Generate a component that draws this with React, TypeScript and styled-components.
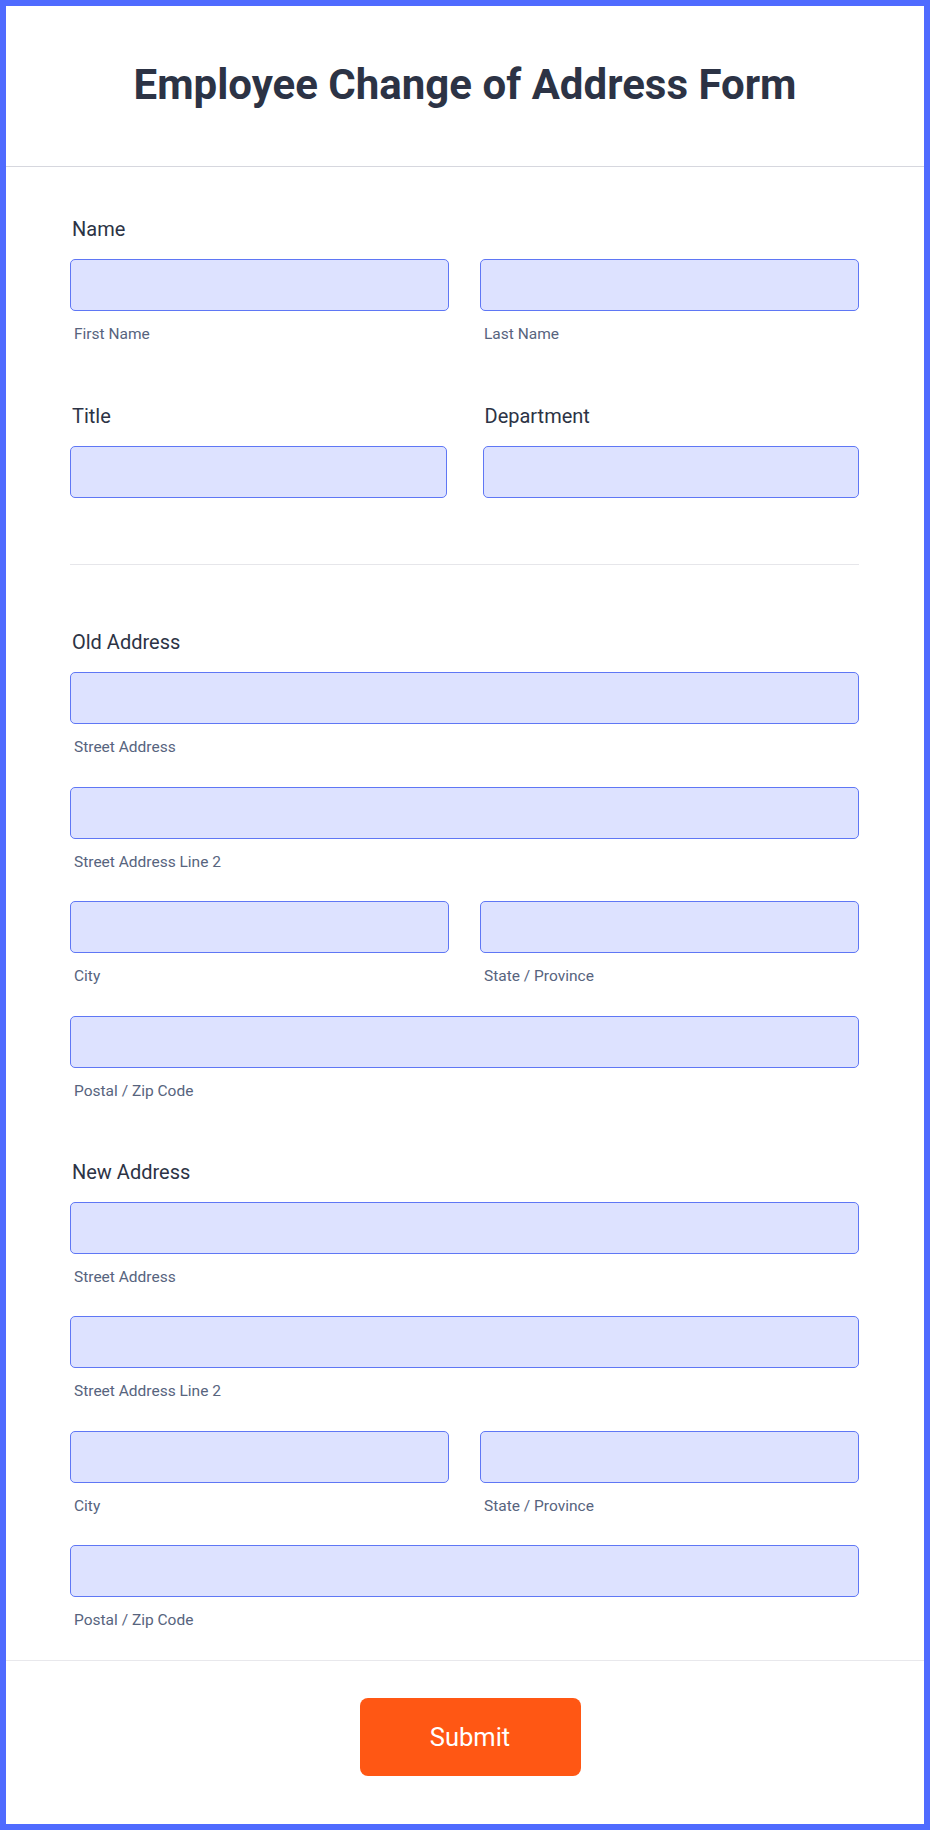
import { createGlobalStyle, styled } from "styled-components";

const GlobalStyle = createGlobalStyle`
  html, body {
    margin: 0;
    padding: 0;
    background: #ffffff;
  }
  * {
    box-sizing: border-box;
  }
`;

export default function App() {
  return (
    <>
      <GlobalStyle />
      <Frame>
        <Header>
          <Heading>Employee Change of Address Form</Heading>
        </Header>
        <Body>
          <Field>
            <Label>Name</Label>
            <Row>
              <Cell>
                <Input />
                <SubLabel>First Name</SubLabel>
              </Cell>
              <Cell>
                <Input />
                <SubLabel>Last Name</SubLabel>
              </Cell>
            </Row>
          </Field>

          <Row $gap={36} $top={60}>
            <Cell>
              <Label>Title</Label>
              <Input />
            </Cell>
            <Cell>
              <Label>Department</Label>
              <Input />
            </Cell>
          </Row>

          <Divider />

          <AddressBlock title="Old Address" />
          <AddressBlock title="New Address" top={59} />
        </Body>
        <Footer>
          <SubmitButton type="button">Submit</SubmitButton>
        </Footer>
      </Frame>
    </>
  );
}

const AddressBlock = ({ title, top = 0 }: { title: string; top?: number }) => (
  <Field $top={top}>
    <Label>{title}</Label>
    <Input />
    <SubLabel>Street Address</SubLabel>
    <Input $top={29.5} />
    <SubLabel>Street Address Line 2</SubLabel>
    <Row $top={29.5}>
      <Cell>
        <Input />
        <SubLabel>City</SubLabel>
      </Cell>
      <Cell>
        <Input />
        <SubLabel>State / Province</SubLabel>
      </Cell>
    </Row>
    <Input $top={29.5} />
    <SubLabel>Postal / Zip Code</SubLabel>
  </Field>
);

const Frame = styled.div`
  width: 930px;
  height: 1830px;
  border: 6px solid #4f6bff;
  background: #ffffff;
  display: flex;
  flex-direction: column;
  font-family: Roboto, "Liberation Sans", sans-serif;
`;

const Header = styled.header`
  height: 161px;
  flex-shrink: 0;
  display: flex;
  align-items: center;
  justify-content: center;
  border-bottom: 1px solid #d6d7de;
`;

const Heading = styled.h1`
  margin: 0;
  padding-bottom: 2px;
  font-size: 42px;
  font-weight: 700;
  line-height: 48px;
  color: #2c3345;
`;

const Body = styled.main`
  padding: 50px 65px 30px 64px;
  display: flex;
  flex-direction: column;
`;

const Field = styled.section<{ $top?: number }>`
  display: flex;
  flex-direction: column;
  margin-top: ${(p) => p.$top ?? 0}px;
`;

const Row = styled.div<{ $gap?: number; $top?: number }>`
  display: grid;
  grid-template-columns: 1fr 1fr;
  column-gap: ${(p) => p.$gap ?? 31}px;
  margin-top: ${(p) => p.$top ?? 0}px;
`;

const Cell = styled.div`
  display: flex;
  flex-direction: column;
  min-width: 0;
`;

const Label = styled.label`
  display: block;
  font-size: 20px;
  line-height: 24px;
  color: #2c3345;
  margin: 0 0 18px 2px;
`;

const Input = styled.div<{ $top?: number }>`
  height: 52px;
  margin-top: ${(p) => p.$top ?? 0}px;
  background: #dde2ff;
  border: 1.5px solid #5f77f5;
  border-radius: 5px;
`;

const SubLabel = styled.span`
  display: block;
  margin: 13px 0 0 4px;
  font-size: 15.5px;
  line-height: 20px;
  color: #57647e;
`;

const Divider = styled.hr`
  margin: 66px 0 65px;
  border: 0;
  border-top: 1.5px solid #e6e6ea;
`;

const Footer = styled.footer`
  flex: 1;
  border-top: 1.5px solid #e8e8ec;
  display: flex;
  justify-content: center;
  padding: 37px 0 0 10px;
`;

const SubmitButton = styled.button`
  width: 221px;
  height: 78px;
  border: 0;
  border-radius: 8px;
  background: #ff5714;
  color: #ffffff;
  font-family: Roboto, "Liberation Sans", sans-serif;
  font-size: 25.5px;
  font-weight: 400;
  cursor: pointer;
`;
